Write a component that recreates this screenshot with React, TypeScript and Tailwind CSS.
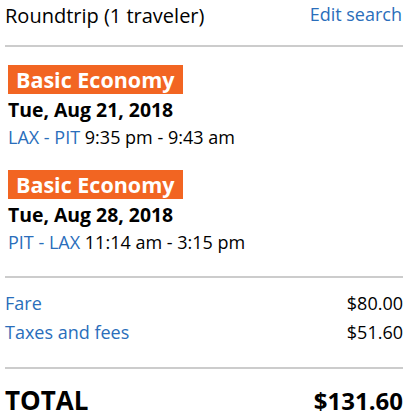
import React from "react";

const font = { fontFamily: '"Open Sans", "Noto Sans", sans-serif' };

function Segment({ date, from, to, times }: { date: string; from: string; to: string; times: string }) {
  return (
    <div className="pl-[3px]">
      <div className="inline-block bg-[#f26522] px-[8px] text-[21.5px] leading-[29px] font-bold text-white">
        Basic Economy
      </div>
      <div className="mt-[4px] text-[19.4px] leading-[24px] font-bold text-black">{date}</div>
      <div className="mt-[3px] text-[18px] leading-[24px] text-black">
        <span className="text-[#2a6ebb]">
          {from} - {to}
        </span>{" "}
        {times}
      </div>
    </div>
  );
}

export default function App() {
  return (
    <div className="w-[408px] h-[420px] bg-white px-[5px] overflow-hidden" style={font}>
      <div className="flex justify-between items-start pt-[3px]">
        <div className="text-[20px] leading-[26px] text-black">Roundtrip (1 traveler)</div>
        <div className="text-[18px] leading-[22px] text-[#2a6ebb] pr-[1px]">Edit search</div>
      </div>
      <div className="mt-[16px] h-[2px] bg-[#cccccc]" />
      <div className="mt-[18px] flex flex-col gap-[21px]">
        <Segment date="Tue, Aug 21, 2018" from="LAX" to="PIT" times="9:35 pm - 9:43 am" />
        <Segment date="Tue, Aug 28, 2018" from="PIT" to="LAX" times="11:14 am - 3:15 pm" />
      </div>
      <div className="mt-[22px] h-[2px] bg-[#cccccc]" />
      <div className="mt-[13px] flex flex-col gap-[5px] text-[18px] leading-[24px]">
        <div className="flex justify-between">
          <span className="text-[#2a6ebb]">Fare</span>
          <span className="text-black">$80.00</span>
        </div>
        <div className="flex justify-between">
          <span className="text-[#2a6ebb]">Taxes and fees</span>
          <span className="text-black">$51.60</span>
        </div>
      </div>
      <div className="mt-[23px] h-[2px] bg-[#cccccc]" />
      <div className="mt-[14px] flex justify-between items-baseline font-bold text-black">
        <span className="text-[26px] leading-[34px]">TOTAL</span>
        <span className="text-[24px] leading-[34px]">$131.60</span>
      </div>
    </div>
  );
}
